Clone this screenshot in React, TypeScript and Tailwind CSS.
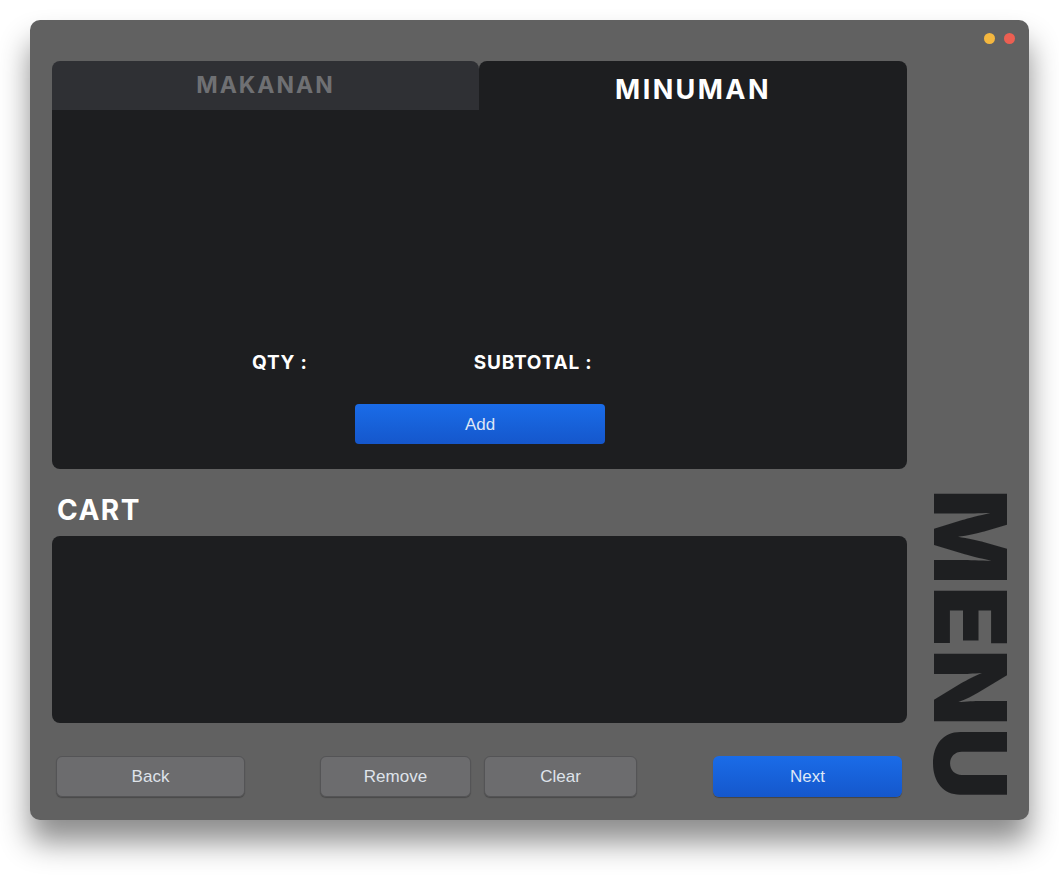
import React from 'react';

const heading = { fontFamily: 'Inter, "DejaVu Sans", sans-serif' };
const ui = { fontFamily: '"Liberation Sans", Arial, sans-serif' };

function GrayButton({ label, width }: { label: string; width: string }) {
  return (
    <button
      style={ui}
      className={`${width} h-[41px] rounded-md border border-[#545456] bg-[#6c6c6e] pt-[1px] text-[17px] text-[#dfe3ea] shadow-[0_1px_1px_rgba(0,0,0,0.25)]`}
    >
      {label}
    </button>
  );
}

function BlueButton({ label, width }: { label: string; width: string }) {
  return (
    <button
      style={ui}
      className={`${width} h-[41px] rounded-md bg-gradient-to-b from-[#1a6ce8] to-[#1557cc] pt-[1px] text-[17px] text-[#dfe8f7] shadow-[0_1px_1px_rgba(0,0,0,0.3)]`}
    >
      {label}
    </button>
  );
}

export default function App() {
  return (
    <div className="min-h-screen w-full bg-white pt-[20px] pl-[30px]">
      <div className="relative flex h-[800px] w-[999px] rounded-[10px] bg-[#616161] shadow-[0_22px_30px_rgba(0,0,0,0.45)]">
        {/* window controls */}
        <div className="absolute right-[14px] top-[13px] flex gap-[9px]">
          <span className="h-[11px] w-[11px] rounded-full bg-[#f4b73f]" />
          <span className="h-[11px] w-[11px] rounded-full bg-[#ec5f52]" />
        </div>

        {/* main column */}
        <div className="ml-[22px] flex w-[855px] flex-col pt-[41px]">
          {/* tabs */}
          <div className="flex h-[49px]">
            <div
              style={heading}
              className="flex w-[427px] items-center justify-center rounded-t-lg bg-[#2f3034] text-[23px] font-bold tracking-[2px] text-[#6f7073]"
            >
              MAKANAN
            </div>
            <div
              style={heading}
              className="flex flex-1 items-center justify-center rounded-t-lg bg-[#1d1e20] pt-[9px] text-[27px] font-bold tracking-[2.4px] text-white"
            >
              MINUMAN
            </div>
          </div>

          {/* item panel */}
          <div className="flex h-[359px] flex-col rounded-b-lg bg-[#1d1e20] pt-[240px]">
            <div style={heading} className="flex h-[26px] items-center text-[19px] font-bold tracking-[0.8px] text-white">
              <span className="ml-[200px]">QTY :</span>
              <span className="ml-[166px]">SUBTOTAL :</span>
            </div>
            <div className="mt-[28px] pl-[303px]">
              <button
                style={ui}
                className="h-[40px] w-[250px] rounded-[4px] bg-gradient-to-b from-[#1a6ce8] to-[#1557cc] pt-[2px] text-[17px] text-[#dde6f6]"
              >
                Add
              </button>
            </div>
          </div>

          {/* cart label */}
          <div className="flex h-[67px] items-center pl-[5px] pt-[15px]">
            <span style={heading} className="text-[28px] font-bold tracking-[1.5px] text-white">
              CART
            </span>
          </div>

          {/* cart panel */}
          <div className="h-[187px] rounded-lg bg-[#1d1e20]" />

          {/* actions */}
          <div className="mt-[33px] flex pl-[4px]">
            <GrayButton label="Back" width="w-[189px]" />
            <div className="ml-[75px]">
              <GrayButton label="Remove" width="w-[151px]" />
            </div>
            <div className="ml-[13px]">
              <GrayButton label="Clear" width="w-[153px]" />
            </div>
            <div className="ml-[76px]">
              <BlueButton label="Next" width="w-[189px]" />
            </div>
          </div>
        </div>

        {/* side title */}
        <div className="flex flex-1 flex-col items-center justify-end pb-[19px] pl-[4px]">
          <span
            style={{ ...heading, writingMode: 'vertical-rl' }}
            className="text-[100px] font-black leading-none tracking-[1.5px] text-[#1e1f21]"
          >
            MENU
          </span>
        </div>
      </div>
    </div>
  );
}
